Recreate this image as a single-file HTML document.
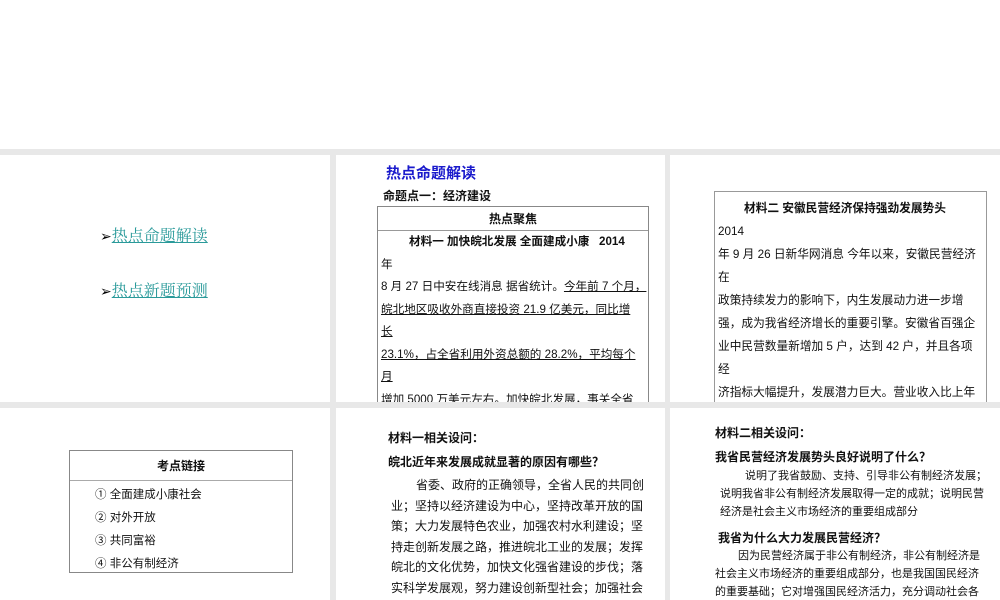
<!DOCTYPE html>
<html><head><meta charset="utf-8"><style>
*{margin:0;padding:0;box-sizing:border-box}
body{width:1000px;height:600px;background:#e8e8e8;position:relative;overflow:hidden;font-family:"Liberation Sans","Noto Sans CJK SC",sans-serif;color:#111}
.top{position:absolute;left:0;top:0;width:1000px;height:149px;background:#fff}
.s{position:absolute;background:#fff;overflow:hidden}
.a{position:absolute;white-space:nowrap}
.b{font-weight:bold}
.sf{font-family:"Liberation Serif","Noto Serif CJK SC",serif}
.nw div{white-space:nowrap}
u{text-decoration:underline}
</style></head><body>
<div class="top"></div>

<div class="s" style="left:0;top:155px;width:330px;height:247px">
 <div class="a sf" style="left:100px;top:68px;font-size:16px;color:#2a9a9a"><span style="color:#000;font-size:14px">➢</span><u>热点命题解读</u></div>
 <div class="a sf" style="left:100px;top:123px;font-size:16px;color:#2a9a9a"><span style="color:#000;font-size:14px">➢</span><u>热点新题预测</u></div>
</div>

<div class="s" style="left:336px;top:155px;width:329px;height:247px">
 <div class="a b" style="left:50px;top:7px;font-size:15px;color:#1a1acc">热点命题解读</div>
 <div class="a b" style="left:47px;top:32px;font-size:12px">命题点一：经济建设</div>
 <div style="position:absolute;left:41px;top:51px;width:272px;height:220px;border:1px solid #888">
  <div class="b" style="height:24px;border-bottom:1px solid #999;text-align:center;font-size:12px;line-height:24px">热点聚焦</div>
  <div class="nw" style="font-size:11.6px;line-height:22.5px;padding-left:3px">
   <div class="b" style="padding-left:28px">材料一 加快皖北发展 全面建成小康 &nbsp; 2014</div>
   <div>年</div>
   <div>8 月 27 日中安在线消息 据省统计。<u>今年前 7 个月，</u></div>
   <div><u>皖北地区吸收外商直接投资 21.9 亿美元，同比增</u></div>
   <div><u>长</u></div>
   <div><u>23.1%，占全省利用外资总额的 28.2%，平均每个</u></div>
   <div><u>月</u></div>
   <div><u>增加 5000 万美元左右</u>。加快皖北发展，事关全省</div>
  </div>
 </div>
</div>

<div class="s" style="left:670px;top:155px;width:330px;height:247px">
 <div class="nw" style="position:absolute;left:44px;top:36px;width:273px;height:240px;border:1px solid #999;font-size:11.7px;line-height:23px;padding-left:3px">
  <div class="b" style="padding-left:26px;margin-top:5px">材料二 安徽民营经济保持强劲发展势头</div>
  <div>2014</div>
  <div>年 9 月 26 日新华网消息 今年以来，安徽民营经济</div>
  <div>在</div>
  <div>政策持续发力的影响下，内生发展动力进一步增</div>
  <div>强，成为我省经济增长的重要引擎。安徽省百强企</div>
  <div>业中民营数量新增加 5 户，达到 42 户，并且各项</div>
  <div>经</div>
  <div>济指标大幅提升，发展潜力巨大。营业收入比上年</div>
  <div>增加 123.33 亿元，增长 6.46%，实现利润 23.54</div>
 </div>
</div>

<div class="s" style="left:0;top:408px;width:330px;height:192px">
 <div style="position:absolute;left:69px;top:42px;width:224px;height:123px;border:1px solid #888">
  <div class="b" style="height:30px;border-bottom:1px solid #aaa;text-align:center;font-size:12px;line-height:30px">考点链接</div>
  <div style="padding-left:25px;font-size:11.5px;line-height:23px;padding-top:3px">
   <div>① 全面建成小康社会</div><div>② 对外开放</div><div>③ 共同富裕</div><div>④ 非公有制经济</div>
  </div>
 </div>
</div>

<div class="s" style="left:336px;top:408px;width:329px;height:192px">
 <div class="a b" style="left:52px;top:21px;font-size:12px">材料一相关设问：</div>
 <div class="a b" style="left:52px;top:45px;font-size:12px">皖北近年来发展成就显著的原因有哪些？</div>
 <div style="position:absolute;left:55px;top:67px;width:255px;font-size:12px;line-height:20.6px">
  <div style="padding-left:25px">省委、政府的正确领导，全省人民的共同创</div>
  <div>业；坚持以经济建设为中心，坚持改革开放的国</div>
  <div>策；大力发展特色农业，加强农村水利建设；坚</div>
  <div>持走创新发展之路，推进皖北工业的发展；发挥</div>
  <div>皖北的文化优势，加快文化强省建设的步伐；落</div>
  <div>实科学发展观，努力建设创新型社会；加强社会</div>
  <div>保障制度建设，积极推进民生建设，把皖北经济</div>
 </div>
</div>

<div class="s" style="left:670px;top:408px;width:330px;height:192px">
 <div class="a b" style="left:45px;top:16px;font-size:12px">材料二相关设问：</div>
 <div class="a b" style="left:45px;top:40px;font-size:12px">我省民营经济发展势头良好说明了什么？</div>
 <div style="position:absolute;left:50px;top:59px;width:270px;font-size:11px;line-height:18px">
  <div style="padding-left:25px">说明了我省鼓励、支持、引导非公有制经济发展；</div>
  <div>说明我省非公有制经济发展取得一定的成就；说明民营</div>
  <div>经济是社会主义市场经济的重要组成部分</div>
 </div>
 <div class="a b" style="left:48px;top:121px;font-size:12px">我省为什么大力发展民营经济？</div>
 <div style="position:absolute;left:45px;top:139px;width:275px;font-size:11px;line-height:18px">
  <div style="padding-left:23px">因为民营经济属于非公有制经济，非公有制经济是</div>
  <div>社会主义市场经济的重要组成部分，也是我国国民经济</div>
  <div>的重要基础；它对增强国民经济活力，充分调动社会各</div>
 </div>
</div>
</body></html>
